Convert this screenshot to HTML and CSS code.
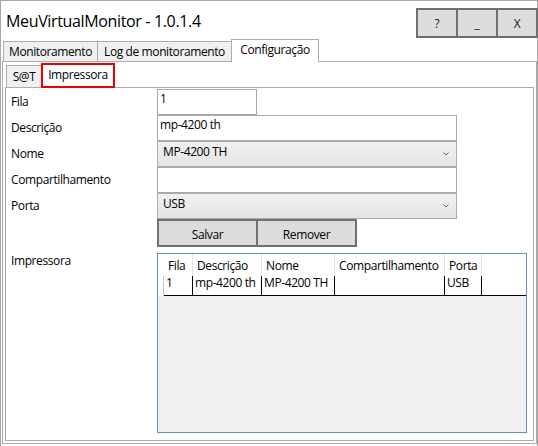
FILE: index.html
```html
<!DOCTYPE html>
<html lang="pt-BR">
<head>
<meta charset="utf-8">
<title>MeuVirtualMonitor</title>
<link rel="stylesheet" href="styles.css">
</head>
<body>
<div class="window">
  <header class="titlebar">
    <div class="title">MeuVirtualMonitor - 1.0.1.4</div>
    <div class="winbtns">
      <div class="winbtn">?</div>
      <div class="winbtn">_</div>
      <div class="winbtn">X</div>
    </div>
  </header>
  <div class="tabctl1">
    <div class="tabstrip1">
      <div class="tab1 t-mon">Monitoramento</div>
      <div class="tab1 t-log">Log de monitoramento</div>
      <div class="tab1 t-cfg active">Configuração</div>
    </div>
    <div class="panel1">
      <div class="tabstrip2">
        <div class="tab2 t-sat">S@T</div>
        <div class="tab2 t-imp active marked">Impressora</div>
      </div>
      <div class="panel2">
        <div class="form">
          <div class="lbl">Fila</div>
          <div class="field short">1</div>

          <div class="lbl">Descrição</div>
          <div class="field">mp-4200 th</div>

          <div class="lbl">Nome</div>
          <div class="field combo"><span>MP-4200 TH</span>
            <svg class="chev" width="6" height="4" viewBox="0 0 6 4"><polyline points="0.5,0.5 3,3 5.5,0.5" fill="none" stroke="#6a6a6a" stroke-width="1"/></svg>
          </div>

          <div class="lbl">Compartilhamento</div>
          <div class="field"></div>

          <div class="lbl">Porta</div>
          <div class="field combo"><span>USB</span>
            <svg class="chev" width="6" height="4" viewBox="0 0 6 4"><polyline points="0.5,0.5 3,3 5.5,0.5" fill="none" stroke="#6a6a6a" stroke-width="1"/></svg>
          </div>

          <div class="lbl"></div>
          <div class="btnrow">
            <div class="btn">Salvar</div>
            <div class="btn">Remover</div>
          </div>

          <div class="lbl lbl-grid">Impressora</div>
          <div class="dgv">
            <div class="dgv-head">
              <div class="hc c-rh"></div>
              <div class="hc c-fila">Fila</div>
              <div class="hc c-desc">Descrição</div>
              <div class="hc c-nome">Nome</div>
              <div class="hc c-comp">Compartilhamento</div>
              <div class="hc c-porta">Porta</div>
              <div class="hc c-fill"></div>
            </div>
            <div class="dgv-row">
              <div class="rc c-rh"></div>
              <div class="rc c-fila">1</div>
              <div class="rc c-desc">mp-4200 th</div>
              <div class="rc c-nome">MP-4200 TH</div>
              <div class="rc c-comp"></div>
              <div class="rc c-porta">USB</div>
              <div class="rc c-fill"></div>
            </div>
          </div>
        </div>
      </div>
    </div>
  </div>
</div>
</body>
</html>
```
FILE: styles.css
```css
* { box-sizing: border-box; margin: 0; padding: 0; }
html, body { width: 538px; height: 446px; background: #ffffff; overflow: hidden; }
body {
  font-family: "Open Sans", "Noto Sans", sans-serif;
  font-size: 12px;
  letter-spacing: -0.4px;
  color: #000000;
}
.window {
  width: 538px;
  height: 446px;
  border: 1px solid #a8a8a8;
  border-bottom: none;
  display: flex;
  flex-direction: column;
}
.titlebar {
  height: 38px;
  display: flex;
  justify-content: space-between;
  align-items: flex-start;
  flex: none;
}
.title {
  font-size: 16px;
  line-height: 20px;
  padding: 10px 0 0 5px;
  letter-spacing: -0.35px;
}
.winbtns {
  display: flex;
  margin-top: 7px;
  margin-right: -1px;
}
.winbtn {
  width: 42px;
  height: 30px;
  border: 2px solid #707070;
  background: #dddddd;
  display: flex;
  align-items: center;
  justify-content: center;
  font-size: 12px;
  color: #1a1a1a;
}
.winbtn + .winbtn { margin-left: -2px; }

.tabctl1 { margin-left: 1px; flex: none; }
.tabstrip1 {
  height: 22px;
  display: flex;
  align-items: flex-end;
  padding-left: 1px;
}
.tab1, .tab2 {
  height: 20px;
  border: 1px solid #acacac;
  border-bottom: none;
  background: #f0f0f0;
  display: flex;
  align-items: center;
  justify-content: center;
  line-height: 16px;
  white-space: nowrap;
}
.tab1 + .tab1, .tab2 + .tab2 { margin-left: -1px; }
.t-mon { width: 95px; }
.t-log { width: 135px; }
.t-cfg { width: 88px; }
.tab1.active {
  height: 23px;
  margin-bottom: -1px;
  background: #ffffff;
  position: relative;
  z-index: 1;
  padding-bottom: 3px;
}
.panel1 {
  height: 383px;
  border: 1px solid #acacac;
  background: #ffffff;
  padding: 0 2px;
}
.tabstrip2 {
  height: 25px;
  display: flex;
  align-items: flex-end;
  padding-left: 1px;
}
.tab2 { height: 22px; }
.t-sat { width: 36px; }
.t-imp { width: 74px; }
.tab2.active {
  height: 25px;
  margin-bottom: -1px;
  background: #ffffff;
  position: relative;
  z-index: 1;
  padding-bottom: 2px;
}
.tab2.marked {
  outline: 2px solid #ee0000;
  outline-offset: -2px;
  z-index: 2;
}
.panel2 {
  height: 354px;
  border: 1px solid #acacac;
  background: #ffffff;
}
.form {
  display: grid;
  grid-template-columns: 151px 1fr;
  padding-top: 1px;
}
.lbl {
  height: 26px;
  line-height: 26px;
  padding-left: 5px;
  white-space: nowrap;
}
.field {
  width: 300px;
  height: 26px;
  border: 1px solid #a9a9a9;
  background: #ffffff;
  padding: 1px 2px 0;
  line-height: 16px;
  white-space: nowrap;
}
.field.short { width: 100px; }
.field.combo {
  border-color: #acacac;
  background: linear-gradient(#f1f1f1, #e4e4e4);
  padding: 2px 7px 0 5px;
  display: flex;
  justify-content: space-between;
  align-items: flex-start;
}
.chev { margin-top: 8px; flex: none; }
.btnrow { display: flex; height: 28px; }
.btn {
  width: 101px;
  height: 28px;
  border: 2px solid #707070;
  background: #dddddd;
  text-align: center;
  padding-top: 6px;
  line-height: 16px;
}
.btn + .btn { margin-left: -2px; }
.lbl-grid {
  margin-top: 6px;
  line-height: 16px;
  height: auto;
}
.dgv {
  margin-top: 6px;
  width: 370px;
  height: 180px;
  border: 1px solid #6d8db6;
  background: #f0f0f0;
}
.dgv-head, .dgv-row { display: flex; background: #ffffff; }
.dgv-head { height: 22px; }
.dgv-row { height: 20px; }
.hc {
  height: 22px;
  border-right: 1px solid #e2e2e2;
  padding: 4px 0 0 4px;
  line-height: 16px;
  white-space: nowrap;
}
.rc {
  height: 20px;
  border-right: 1px solid #000000;
  border-bottom: 1px solid #000000;
  padding-left: 2px;
  line-height: 13px;
  white-space: nowrap;
}
.c-rh { width: 6px; flex: none; padding: 0; }
.hc.c-rh { border-right: none; }
.rc.c-rh { border-right: 1px solid #a9d3f2; border-bottom: none; }
.c-fila { width: 29px; flex: none; }
.c-desc { width: 69px; flex: none; }
.c-nome { width: 73px; flex: none; }
.c-comp { width: 110px; flex: none; }
.c-porta { width: 37px; flex: none; }
.c-fill { flex: 1; }
.hc.c-fill { border-right: none; }
.rc.c-fill { border-right: none; }
```
